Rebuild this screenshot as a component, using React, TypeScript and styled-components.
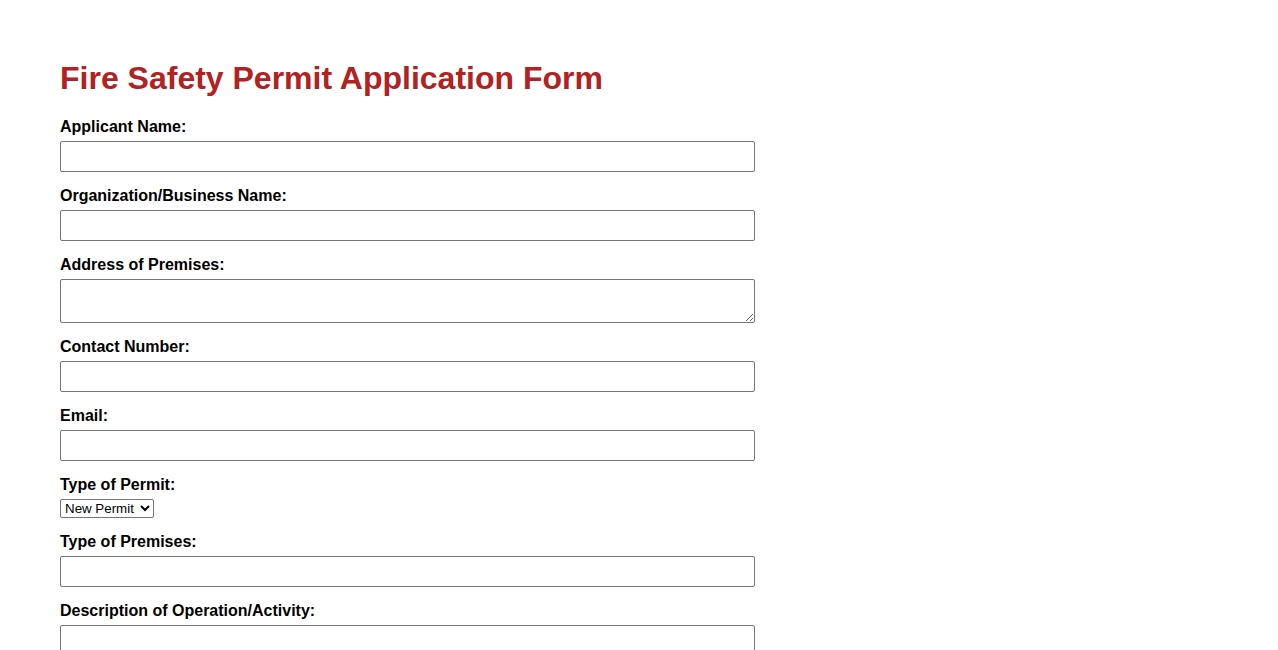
import React from 'react';
import styled, { createGlobalStyle } from 'styled-components';

const GlobalStyle = createGlobalStyle`
  body {
    margin: 0;
    background: #fff;
    font-family: "Liberation Sans", Arial, sans-serif;
    color: #000;
  }
`;

const Page = styled.div`
  padding: 60px;
`;

const Title = styled.h1`
  margin: 0 0 20px;
  font-size: 32px;
  line-height: 37px;
  font-weight: bold;
  color: #b22222;
`;

const Form = styled.form`
  display: flex;
  flex-direction: column;
  align-items: flex-start;
  width: 695px;
`;

const Label = styled.label`
  display: block;
  font-size: 16px;
  line-height: 18px;
  font-weight: bold;
  padding-top: 1px;
  margin-bottom: 5px;
`;

const Input = styled.input`
  box-sizing: border-box;
  width: 695px;
  height: 31px;
  margin: 0 0 14px;
  padding: 6px 8px;
  border: 1px solid #767676;
  border-radius: 2px;
  font: 16px "Liberation Sans", Arial, sans-serif;
`;

const TextArea = styled.textarea<{ $tall?: boolean }>`
  box-sizing: border-box;
  width: 695px;
  height: ${(p) => (p.$tall ? 60 : 44)}px;
  margin: 0 0 14px;
  padding: 6px 8px;
  border: 1px solid #767676;
  border-radius: 2px;
  font: 16px "Liberation Sans", Arial, sans-serif;
`;

const Select = styled.select`
  box-sizing: border-box;
  height: 19px;
  margin: 0 0 14px;
  font: 13.33px "Liberation Sans", Arial, sans-serif;
  color: #000;
  border: 1px solid #767676;
  border-radius: 2px;
  background: #fff;
`;

const App = () => (
  <Page>
    <GlobalStyle />
    <Title>Fire Safety Permit Application Form</Title>
    <Form>
      <Label htmlFor="applicant">Applicant Name:</Label>
      <Input id="applicant" type="text" />

      <Label htmlFor="org">Organization/Business Name:</Label>
      <Input id="org" type="text" />

      <Label htmlFor="address">Address of Premises:</Label>
      <TextArea id="address" rows={2} />

      <Label htmlFor="contact">Contact Number:</Label>
      <Input id="contact" type="tel" />

      <Label htmlFor="email">Email:</Label>
      <Input id="email" type="email" />

      <Label htmlFor="permit">Type of Permit:</Label>
      <Select id="permit" defaultValue="new">
        <option value="new">New Permit</option>
        <option value="renewal">Renewal</option>
        <option value="modification">Modification</option>
      </Select>

      <Label htmlFor="premises">Type of Premises:</Label>
      <Input id="premises" type="text" />

      <Label htmlFor="description">Description of Operation/Activity:</Label>
      <TextArea id="description" rows={4} $tall />
    </Form>
  </Page>
);

export default App;
